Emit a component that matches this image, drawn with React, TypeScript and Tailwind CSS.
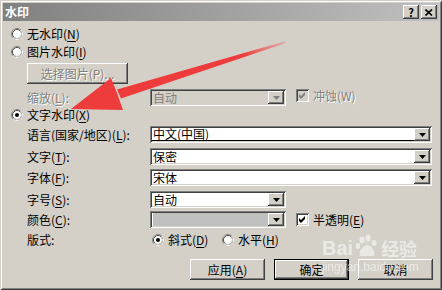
import type { ReactNode } from "react";

const font = { fontFamily: '"Noto Sans CJK SC", "Noto Sans", sans-serif' };

const raised =
  "shadow-[inset_-1px_-1px_#404040,inset_1px_1px_#ffffff,inset_-2px_-2px_#808080,inset_2px_2px_#d4d0c8]";
const sunken =
  "shadow-[inset_1px_1px_#808080,inset_-1px_-1px_#ffffff,inset_2px_2px_#404040,inset_-2px_-2px_#d4d0c8]";

function Key({ k }: { k: string }) {
  return (
    <span>
      (<span className="underline underline-offset-2">{k}</span>)
    </span>
  );
}

function Radio({ checked }: { checked?: boolean }) {
  return (
    <svg width="12" height="12" viewBox="0 0 12 12" className="shrink-0">
      <circle cx="6" cy="6" r="5.5" fill="#fff" stroke="#808080" />
      <path d="M9.9 2.1 A5.5 5.5 0 0 1 2.1 9.9" fill="none" stroke="#fff" />
      <circle cx="6" cy="6" r="4.5" fill="#fff" stroke="#404040" />
      <path d="M9.2 2.8 A4.5 4.5 0 0 1 2.8 9.2" fill="none" stroke="#d4d0c8" />
      <circle cx="6" cy="6" r="3.6" fill="#fff" />
      {checked && <circle cx="6" cy="6" r="2" fill="#000" />}
    </svg>
  );
}

function Check({ disabled }: { disabled?: boolean }) {
  return (
    <div
      className={`flex h-[13px] w-[13px] shrink-0 items-center justify-center ${sunken} ${
        disabled ? "bg-[#d4d0c8]" : "bg-white"
      }`}
    >
      <svg width="7" height="7" viewBox="0 0 7 7">
        <path d="M0 2 L2 4 L6 0 L6 3 L2 7 L0 5 Z" fill={disabled ? "#808080" : "#000"} />
      </svg>
    </div>
  );
}

function DropBtn({ disabled }: { disabled?: boolean }) {
  return (
    <div className={`flex h-full w-[16px] shrink-0 items-center justify-center bg-[#d4d0c8] ${raised}`}>
      <svg width="7" height="4" viewBox="0 0 7 4">
        <path d="M0 0 H7 L3.5 4 Z" fill={disabled ? "#808080" : "#000"} />
      </svg>
    </div>
  );
}

function Combo({
  wide,
  children,
  disabled,
  grey,
  focus,
}: {
  wide?: boolean;
  children?: ReactNode;
  disabled?: boolean;
  grey?: boolean;
  focus?: boolean;
}) {
  return (
    <div
      className={`flex h-[17px] shrink-0 p-[2px] ${sunken} ${wide ? "w-[282px]" : "w-[136px]"} ${
        disabled ? "bg-[#d4d0c8]" : "bg-white"
      }`}
    >
      <div
        className={`flex flex-1 items-center pl-[1px] text-[12px] leading-none ${
          disabled ? "text-[#808080]" : "text-black"
        } ${focus ? "border-b border-black" : ""}`}
      >
        {grey ? <div className="h-full w-full bg-[#c0c0c0]" /> : children}
      </div>
      <DropBtn disabled={disabled} />
    </div>
  );
}

function Row({ label, children, mt }: { label: ReactNode; children: ReactNode; mt: string }) {
  return (
    <div className={`flex items-center ${mt}`}>
      <span className="ml-[24px] w-[123px] shrink-0 text-[12px] leading-[14px]">{label}</span>
      {children}
    </div>
  );
}

function Btn({ children, def }: { children: ReactNode; def?: boolean }) {
  return (
    <div
      className={`flex h-[21px] w-[75px] items-center justify-center bg-[#d4d0c8] text-[12px] ${
        def
          ? "shadow-[inset_0_0_0_1px_#000,inset_-2px_-2px_#404040,inset_2px_2px_#ffffff,inset_-3px_-3px_#808080]"
          : raised
      }`}
    >
      {children}
    </div>
  );
}

export default function App() {
  return (
    <div
      className="relative h-[290px] w-[442px] overflow-hidden bg-[#d4d0c8] text-black shadow-[inset_1px_1px_#d4d0c8,inset_-1px_-1px_#404040,inset_2px_2px_#ffffff,inset_-2px_-2px_#808080]"
      style={font}
    >
      <div className="px-[3px] pt-[3px]">
        {/* title bar */}
        <div className="flex h-[18px] items-center bg-[linear-gradient(90deg,#808080,#c0c0c0)] px-[2px]">
          <span className="flex-1 text-[12px] font-bold leading-[12px] text-white">水印</span>
          <div className={`flex h-[14px] w-[16px] items-center justify-center bg-[#d4d0c8] text-[11px] font-bold leading-none ${raised}`}>
            ?
          </div>
          <div className={`ml-[2px] flex h-[14px] w-[16px] items-center justify-center bg-[#d4d0c8] ${raised}`}>
            <svg width="8" height="7" viewBox="0 0 8 7">
              <path d="M0.5 0.5 L7 6.5 M7 0.5 L0.5 6.5" stroke="#000" strokeWidth="1.6" />
            </svg>
          </div>
        </div>

        <div className="flex flex-col">
          <div className="mt-[5px] flex h-[16px] items-center gap-[4px] pl-[8px] text-[12px]">
            <Radio />
            <span>
              无水印<Key k="N" />
            </span>
          </div>
          <div className="mt-[2px] flex h-[16px] items-center gap-[4px] pl-[8px] text-[12px]">
            <Radio />
            <span>
              图片水印<Key k="I" />
            </span>
          </div>
          <div
            className={`ml-[24px] mt-[3px] flex h-[21px] w-[101px] items-center justify-center bg-[#d4d0c8] text-[12px] text-[#808080] [text-shadow:1px_1px_#fff] ${raised}`}
          >
            选择图片(P)...
          </div>

          <div className="mt-[5px] flex items-center">
            <span className="ml-[24px] w-[123px] shrink-0 text-[12px] leading-[14px] text-[#808080] [text-shadow:1px_1px_#fff]">
              缩放<Key k="L" />:
            </span>
            <Combo disabled>自动</Combo>
            <div className="ml-[10px] flex items-center gap-[4px] self-start">
              <Check disabled />
              <span className="text-[12px] leading-[13px] text-[#808080] [text-shadow:1px_1px_#fff]">
                冲蚀(W)
              </span>
            </div>
          </div>

          <div className="mt-[1px] flex h-[16px] items-center gap-[4px] pl-[8px] text-[12px]">
            <Radio checked />
            <span>
              文字水印<Key k="X" />
            </span>
          </div>

          <Row mt="mt-[3px]" label={<>语言(国家/地区)<Key k="L" />:</>}>
            <Combo wide focus>
              中文(中国)
            </Combo>
          </Row>
          <Row mt="mt-[5px]" label={<>文字<Key k="T" />:</>}>
            <Combo wide>保密</Combo>
          </Row>
          <Row mt="mt-[4px]" label={<>字体<Key k="F" />:</>}>
            <Combo wide>宋体</Combo>
          </Row>
          <Row mt="mt-[5px]" label={<>字号<Key k="S" />:</>}>
            <Combo>自动</Combo>
          </Row>
          <Row mt="mt-[3px]" label={<>颜色<Key k="C" />:</>}>
            <Combo grey />
            <div className="ml-[10px] flex items-center gap-[4px]">
              <Check />
              <span className="text-[12px] leading-[13px]">
                半透明<Key k="E" />
              </span>
            </div>
          </Row>
          <Row mt="mt-[4px]" label="版式:">
            <div className="flex h-[16px] items-center text-[12px]">
              <span className="ml-[2px]">
                <Radio checked />
              </span>
              <span className="ml-[4px] w-[54px]">
                斜式<Key k="D" />
              </span>
              <Radio />
              <span className="ml-[4px]">
                水平<Key k="H" />
              </span>
            </div>
          </Row>

          <div className="mt-[11px] flex justify-end gap-[9px] pr-[6px]">
            <Btn>
              应用<Key k="A" />
            </Btn>
            <Btn def>确定</Btn>
            <Btn>取消</Btn>
          </div>
        </div>
      </div>

      {/* red annotation arrow */}
      <svg className="pointer-events-none absolute left-0 top-0" width="442" height="290" viewBox="0 0 442 290">
        <defs>
          <linearGradient id="fade" x1="286" y1="42" x2="118" y2="94" gradientUnits="userSpaceOnUse">
            <stop offset="0" stopColor="#f26a6a" stopOpacity="0.35" />
            <stop offset="0.25" stopColor="#ee3b3b" />
            <stop offset="1" stopColor="#ee3b3b" />
          </linearGradient>
        </defs>
        <path d="M285 41.3 L286 43 L121 98.5 L117 89.5 Z" fill="url(#fade)" />
        <path d="M71 109 L111 78 L117 93 L123 110 Z" fill="#ee3b3b" />
      </svg>

      {/* baidu watermark */}
      <div className="pointer-events-none absolute left-[322px] top-[234px] flex flex-col items-start text-white opacity-55">
        <div className="flex items-end gap-[2px]">
          <span className="text-[20px] font-bold leading-[20px]" style={{ fontFamily: '"Liberation Sans", sans-serif' }}>
            Bai
          </span>
          <svg width="24" height="24" viewBox="0 0 24 24">
            <ellipse cx="7" cy="6" rx="2.5" ry="3.5" fill="#fff" />
            <ellipse cx="13" cy="4" rx="2.5" ry="3.5" fill="#fff" />
            <ellipse cx="19" cy="9" rx="2.5" ry="3" fill="#fff" />
            <ellipse cx="3" cy="12" rx="2.2" ry="3" fill="#fff" />
            <path d="M5 22 C3 17 9 11 12 11 C16 11 21 17 19 22 Z" fill="#fff" />
          </svg>
          <span className="text-[18px] font-bold leading-[20px]">经验</span>
        </div>
        <span className="mt-[3px] text-[12px] leading-[12px]" style={{ fontFamily: '"Liberation Sans", sans-serif' }}>
          jingyan.baidu.com
        </span>
      </div>
    </div>
  );
}
